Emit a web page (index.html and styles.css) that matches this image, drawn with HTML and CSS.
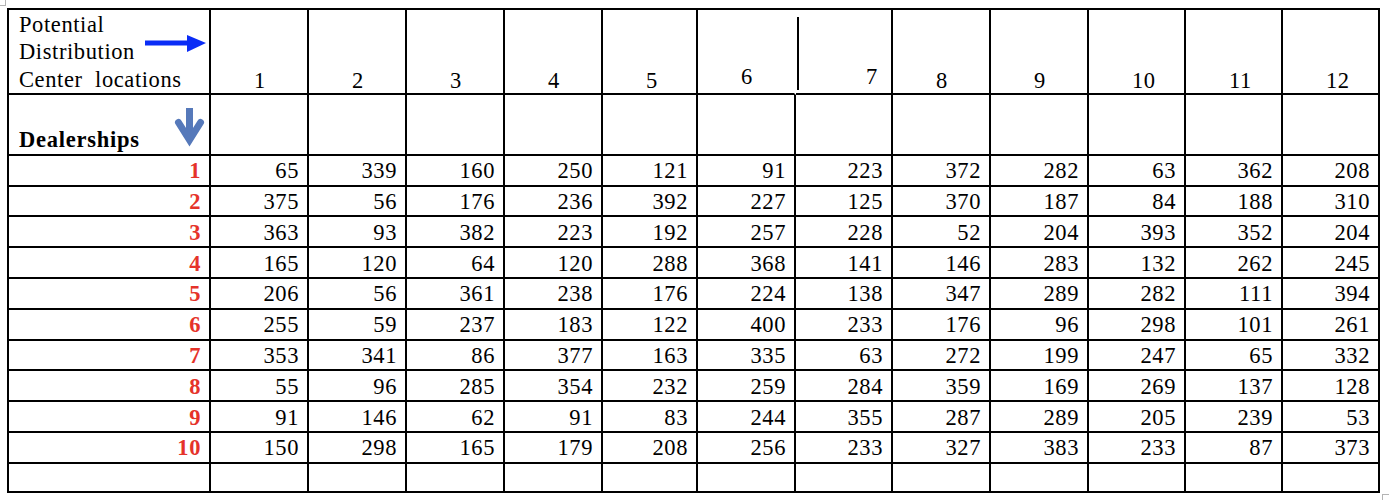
FILE: index.html
```html
<!DOCTYPE html>
<html>
<head>
<meta charset="utf-8">
<link rel="stylesheet" href="styles.css">
</head>
<body>
<div class="crop crop-tl"></div>
<table class="grid">
  <colgroup>
    <col class="c-label">
    <col class="c98"><col class="c98"><col class="c98"><col class="c98">
    <col class="c95"><col class="c98"><col class="c97"><col class="c98">
    <col class="c98"><col class="c97"><col class="c97"><col class="c97">
  </colgroup>
  <thead>
    <tr class="r-head">
      <th class="corner">
        <div class="corner-text">Potential<br>Distribution<br>Center&nbsp; locations</div>
        <svg class="arrow-right" width="61" height="18" viewBox="0 0 61 18"><rect x="0" y="5.5" width="44" height="5" fill="#0a2cf6"/><polygon points="42,0 61,8 42,17" fill="#0a2cf6"/></svg>
      </th>
      <th class="hn">1</th><th class="hn">2</th><th class="hn">3</th><th class="hn">4</th>
      <th class="hn">5</th><th class="hn h6">6</th><th class="hn h7">7</th><th class="hn">8</th>
      <th class="hn">9</th><th class="hn">10</th><th class="hn">11</th><th class="hn">12</th>
    </tr>
    <tr class="r-dealer">
      <th class="dealer">
        <div class="dealer-box">
          <span class="dealer-text">Dealerships</span>
          <svg class="arrow-down" width="31" height="40" viewBox="0 0 31 40"><line x1="15.5" y1="0" x2="15.5" y2="31" stroke="#5679ba" stroke-width="7"/><polyline points="4.5,14.5 15.5,32 26.5,14.5" fill="none" stroke="#5679ba" stroke-width="7" stroke-linecap="round" stroke-linejoin="miter"/></svg>
        </div>
      </th>
      <td></td><td></td><td></td><td></td><td></td><td></td><td></td><td></td><td></td><td></td><td></td><td></td>
    </tr>
  </thead>
  <tbody>
    <tr class="r-body"><th class="rl">1</th><td>65</td><td>339</td><td>160</td><td>250</td><td>121</td><td>91</td><td>223</td><td>372</td><td>282</td><td>63</td><td>362</td><td>208</td></tr>
    <tr class="r-body"><th class="rl">2</th><td>375</td><td>56</td><td>176</td><td>236</td><td>392</td><td>227</td><td>125</td><td>370</td><td>187</td><td>84</td><td>188</td><td>310</td></tr>
    <tr class="r-body"><th class="rl">3</th><td>363</td><td>93</td><td>382</td><td>223</td><td>192</td><td>257</td><td>228</td><td>52</td><td>204</td><td>393</td><td>352</td><td>204</td></tr>
    <tr class="r-body"><th class="rl">4</th><td>165</td><td>120</td><td>64</td><td>120</td><td>288</td><td>368</td><td>141</td><td>146</td><td>283</td><td>132</td><td>262</td><td>245</td></tr>
    <tr class="r-body"><th class="rl">5</th><td>206</td><td>56</td><td>361</td><td>238</td><td>176</td><td>224</td><td>138</td><td>347</td><td>289</td><td>282</td><td>111</td><td>394</td></tr>
    <tr class="r-body"><th class="rl">6</th><td>255</td><td>59</td><td>237</td><td>183</td><td>122</td><td>400</td><td>233</td><td>176</td><td>96</td><td>298</td><td>101</td><td>261</td></tr>
    <tr class="r-body"><th class="rl">7</th><td>353</td><td>341</td><td>86</td><td>377</td><td>163</td><td>335</td><td>63</td><td>272</td><td>199</td><td>247</td><td>65</td><td>332</td></tr>
    <tr class="r-body"><th class="rl">8</th><td>55</td><td>96</td><td>285</td><td>354</td><td>232</td><td>259</td><td>284</td><td>359</td><td>169</td><td>269</td><td>137</td><td>128</td></tr>
    <tr class="r-body"><th class="rl">9</th><td>91</td><td>146</td><td>62</td><td>91</td><td>83</td><td>244</td><td>355</td><td>287</td><td>289</td><td>205</td><td>239</td><td>53</td></tr>
    <tr class="r-body"><th class="rl">10</th><td>150</td><td>298</td><td>165</td><td>179</td><td>208</td><td>256</td><td>233</td><td>327</td><td>383</td><td>233</td><td>87</td><td>373</td></tr>
    <tr class="r-empty"><td></td><td></td><td></td><td></td><td></td><td></td><td></td><td></td><td></td><td></td><td></td><td></td><td></td></tr>
  </tbody>
</table>
<div class="crop crop-br"></div>
</body>
</html>
```
FILE: styles.css
```css
html, body {
  background: #ffffff;
}
body {
  margin: 8px 0 0 7px;
  font-family: "Liberation Serif", "Times New Roman", serif;
  font-size: 22.5px;
  letter-spacing: 0.6px;
  color: #000000;
}
.grid {
  border-collapse: separate;
  border-spacing: 0;
  table-layout: fixed;
  width: 1373px;
  border-left: 2px solid #000;
  border-top: 2px solid #000;
}
.c-label { width: 202px; }
.c98 { width: 98px; }
.c97 { width: 97px; }
.c95 { width: 95px; }
.grid th,
.grid td {
  box-sizing: border-box;
  border-right: 2px solid #000;
  border-bottom: 2px solid #000;
  padding: 0;
  font-weight: normal;
  line-height: 22px;
}
.r-head { height: 84px; }
.r-dealer { height: 61px; }
.r-body { height: 30.8px; }
.r-empty { height: 29.5px; }

.corner {
  position: relative;
  vertical-align: top;
  text-align: left;
}
.corner-text {
  padding: 1px 0 0 10px;
  line-height: 27.3px;
  white-space: nowrap;
}
.arrow-right {
  position: absolute;
  right: 3px;
  top: 25px;
  display: block;
}
.hn {
  vertical-align: bottom;
  text-align: left;
  padding: 0 0 1px 43px !important;
}
.h6 {
  border-right-color: transparent !important;
  padding-bottom: 5px !important;
}
.h7 {
  position: relative;
  padding: 0 0 5px 70px !important;
}
.h7::before {
  content: "";
  position: absolute;
  left: 1px;
  top: 7px;
  width: 2px;
  height: 73px;
  background: #000;
}

.dealer {
  vertical-align: bottom;
  text-align: left;
}
.dealer-box {
  display: flex;
  justify-content: space-between;
  align-items: flex-end;
  padding-left: 10px;
}
.dealer-text {
  font-weight: bold;
  letter-spacing: 0.75px;
  margin-bottom: 3px;
}
.arrow-down {
  display: block;
  margin: 0 4px 6px 0;
}

.r-body td {
  text-align: right;
  vertical-align: middle;
  padding: 2px 8px 0 0;
}
.rl {
  text-align: right;
  vertical-align: middle;
  padding: 2px 8px 0 0 !important;
  color: #e5332a;
  font-weight: bold !important;
}

.crop {
  position: absolute;
  border-color: #b4b4b4;
  border-style: solid;
  border-width: 0;
}
.crop-tl {
  left: 0;
  top: 0;
  width: 5px;
  height: 5px;
  border-right-width: 1px;
  border-bottom-width: 1px;
}
.crop-br {
  left: 1382px;
  top: 494px;
  width: 7px;
  height: 6px;
  border-left-width: 1px;
  border-top-width: 1px;
}
```
